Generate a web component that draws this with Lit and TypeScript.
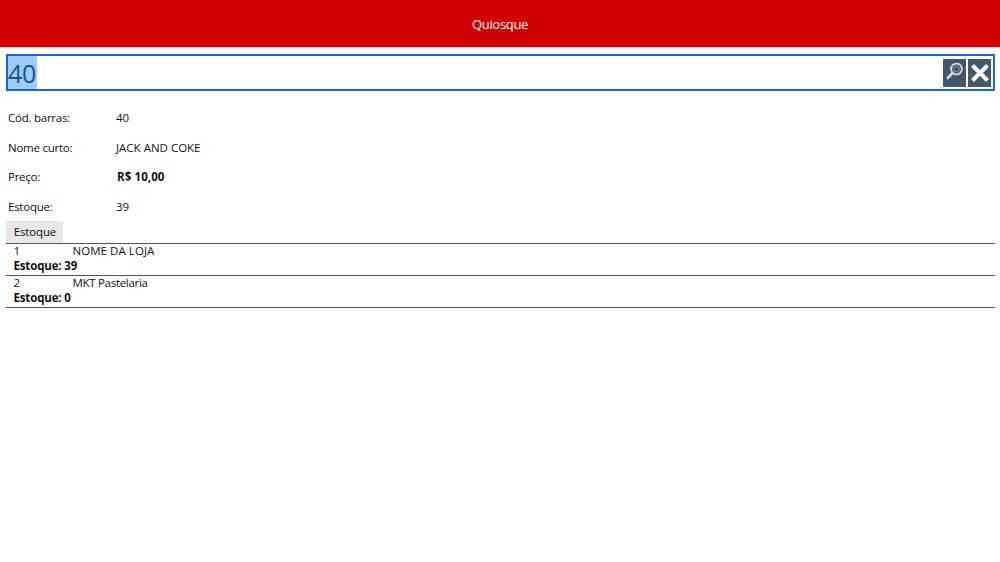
import { LitElement, html, css } from "lit";
import { customElement } from "lit/decorators.js";

const info: [string, string, string][] = [
  ["Cód. barras:", "40", ""],
  ["Nome curto:", "JACK AND COKE", ""],
  ["Preço:", "R$ 10,00", "price"],
  ["Estoque:", "39", ""],
];
const stores: [string, string, string, string][] = [
  ["1", "NOME DA LOJA", "Estoque: 39", "upper"],
  ["2", "MKT Pastelaria", "Estoque: 0", "mixed"],
];

@customElement("app-root")
export class AppRoot extends LitElement {
  static styles = css`
    :host {
      display: block;
      width: 1000px;
      height: 562px;
      background: #fff;
      color: #111;
      font-family: "Open Sans", "Noto Sans", sans-serif;
      font-size: 11.5px;
      overflow: hidden;
    }
    .top {
      height: 47px;
      background: #d00000;
      color: #fff;
      display: flex;
      align-items: center;
      justify-content: center;
      font-size: 13px;
      letter-spacing: -0.3px;
    }
    .main {
      padding: 7px 5px 0 6px;
    }
    .search {
      height: 37px;
      box-sizing: border-box;
      border: 2px solid #1b63dc;
      display: flex;
      align-items: center;
      padding-right: 2px;
      gap: 2px;
    }
    .value {
      flex: 1;
    }
    .value span {
      display: inline-block;
      height: 33px;
      line-height: 34px;
      background: #9ccbff;
      color: #1c4f80;
      font-size: 25px;
      width: 29px;
      letter-spacing: -0.2px;
    }
    .btn {
      width: 23px;
      height: 28px;
      background: #43566b;
      display: flex;
      align-items: center;
      justify-content: center;
    }
    .info {
      margin: 12px 0 0 2px;
    }
    .row {
      display: grid;
      grid-template-columns: 108px 1fr;
      height: 29.5px;
      align-items: center;
    }
    .label {
      letter-spacing: -0.25px;
    }
    .price {
      font-weight: 700;
      letter-spacing: 0.1px;
      padding-left: 1px;
    }
    .bold {
      font-weight: 700;
      letter-spacing: -0.15px;
    }
    .tab {
      width: 57px;
      height: 21px;
      padding: 0 0 1px 1px;
      box-sizing: content-box;
      width: 56px;
      background: #e8e8e8;
      display: flex;
      align-items: center;
      justify-content: center;
      letter-spacing: -0.15px;
    }
    .store {
      border-top: 1px solid #555;
      padding-left: 7.5px;
      height: 32px;
      box-sizing: border-box;
      line-height: 15px;
    }
    .list {
      border-bottom: 1px solid #555;
    }
    .head {
      display: grid;
      grid-template-columns: 59px 1fr;
      margin-top: -1px;
    }
    .upper {
      letter-spacing: 0.05px;
    }
    .mixed {
      letter-spacing: -0.3px;
    }
  `;

  render() {
    return html`
      <div class="top">Quiosque</div>
      <div class="main">
        <div class="search">
          <div class="value"><span>40</span></div>
          <div class="btn">
            <svg width="19" height="19" viewBox="0 0 19 19" fill="none" stroke="#d5dbe1">
              <circle cx="11.5" cy="6" r="5.4" stroke-width="1.8" />
              <circle cx="11.5" cy="6" r="2.8" stroke-width="1" opacity="0.5" />
              <path d="M7.5 10L2.8 15" stroke-width="2.6" stroke-linecap="round" />
            </svg>
          </div>
          <div class="btn">
            <svg width="20" height="20" viewBox="0 0 20 20" fill="none" stroke="#fff">
              <path d="M2.5 2.5L17.5 17.5M17.5 2.5L2.5 17.5" stroke-width="4" />
            </svg>
          </div>
        </div>
        <div class="info">
          ${info.map(
            ([k, v, c]) => html`<div class="row"><div class="label">${k}</div><div class=${c}>${v}</div></div>`
          )}
        </div>
        <div class="tab">Estoque</div>
        <div class="list">
          ${stores.map(
            ([n, name, stock, c]) => html`<div class="store">
              <div class="head"><div>${n}</div><div class=${c}>${name}</div></div>
              <div class="bold">${stock}</div>
            </div>`
          )}
        </div>
      </div>
    `;
  }
}
